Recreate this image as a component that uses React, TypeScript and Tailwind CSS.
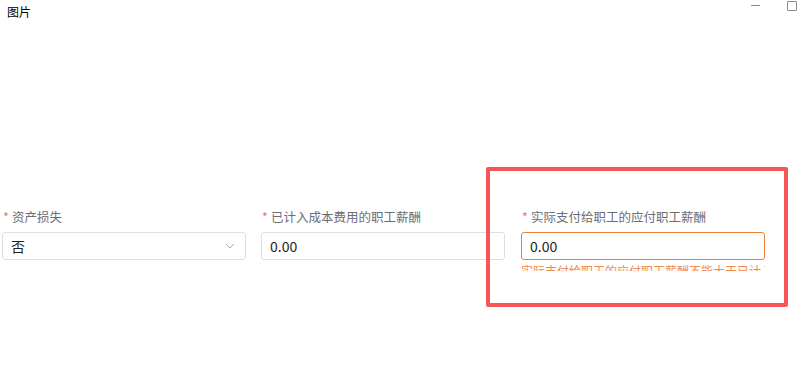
import { ReactNode } from 'react'

const cjk = { fontFamily: '"Microsoft YaHei", "Noto Sans CJK SC", "Noto Sans", sans-serif' }

function Label({ children }: { children: ReactNode }) {
  return (
    <div className="flex items-center h-[20px] text-[12.5px] leading-[20px] text-[#6b6e75]">
      <span className="text-[#f56c6c] w-[10px] pl-[1px]">*</span>
      <span>{children}</span>
    </div>
  )
}

function Field({ label, value, select, error }: { label: string; value: string; select?: boolean; error?: string }) {
  return (
    <div className="w-[244px] flex flex-col">
      <Label>{label}</Label>
      <div
        className={`mt-[5px] h-[28px] rounded-[3px] border flex items-center px-[8px] text-[14px] text-[#1f2329] ${
          error ? 'border-[#ee7d35]' : 'border-[#dcdfe6]'
        }`}
      >
        <span className="flex-1">{value}</span>
        {select && (
          <svg width="10" height="6" viewBox="0 0 10 6" className="mr-[2px]">
            <path d="M1 1 L5 5 L9 1" fill="none" stroke="#a8abb2" strokeWidth="1" />
          </svg>
        )}
      </div>
      {error && (
        <div className="mt-[5px] h-[6px] overflow-hidden">
          <div className="text-[12px] leading-[12px] text-[#f08b4e] whitespace-nowrap">{error}</div>
        </div>
      )}
    </div>
  )
}

export default function App() {
  return (
    <div className="relative w-[802px] h-[372px] bg-white overflow-hidden" style={cjk}>
      {/* title bar */}
      <div className="flex items-start h-[24px]">
        <span className="ml-[7px] mt-[4px] text-[12px] leading-[16px] text-black">图片</span>
        <div className="ml-auto flex items-start">
          <div className="mt-[5px] w-[9px] h-px bg-[#8a8a8a]" />
          <div className="ml-[27px] mr-[5px] mt-[1px] w-[10px] h-[10px] border border-[#8a8a8a] rounded-[1px]" />
        </div>
      </div>

      {/* form row */}
      <div className="mt-[183px] ml-[2px] flex">
        <Field label="资产损失" value="否" select />
        <div className="ml-[15px]">
          <Field label="已计入成本费用的职工薪酬" value="0.00" />
        </div>
        <div className="ml-[16px]">
          <Field
            label="实际支付给职工的应付职工薪酬"
            value="0.00"
            error="实际支付给职工的应付职工薪酬不能大于已计入成本费用的职工"
          />
        </div>
      </div>

      {/* highlight annotation */}
      <div className="absolute left-[486px] top-[167px] w-[302px] h-[140px] border-[4px] border-[#f55656] rounded-[2px] pointer-events-none" />
    </div>
  )
}
